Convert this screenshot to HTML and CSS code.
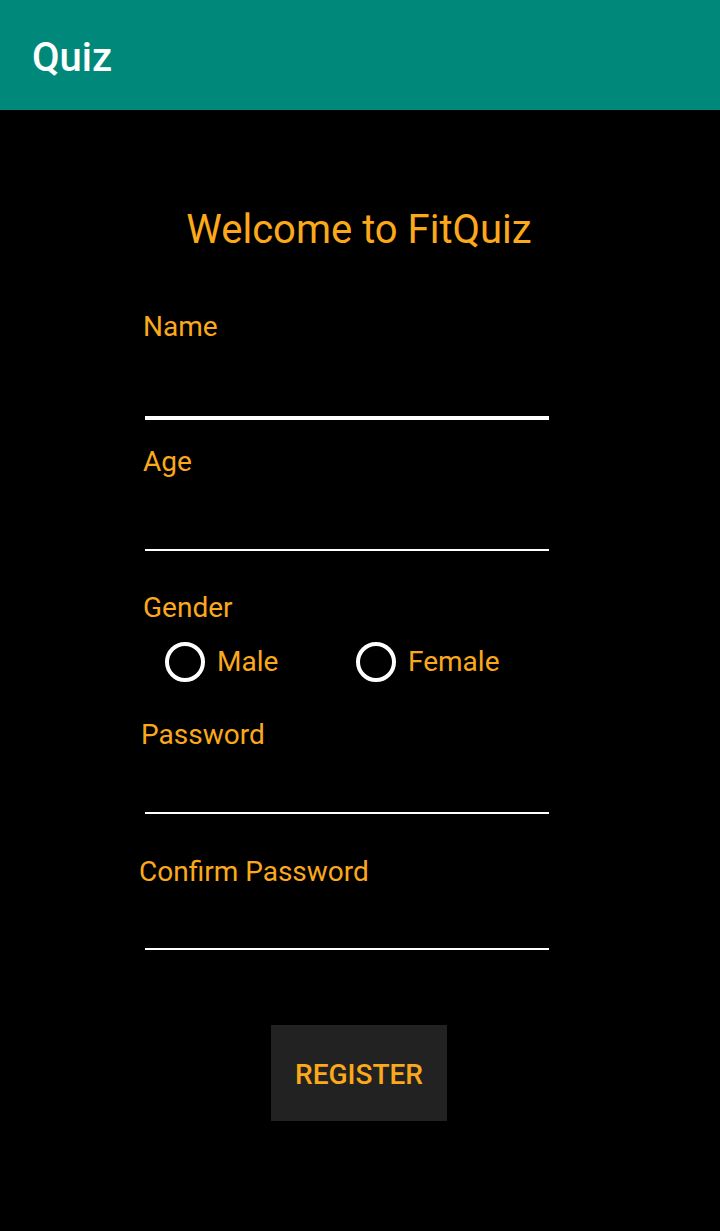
FILE: index.html
```html
<!DOCTYPE html>
<html>
<head>
<meta charset="utf-8">
<link rel="stylesheet" href="styles.css">
</head>
<body>
<header class="appbar"><span class="appbar-title">Quiz</span></header>
<main class="content">
  <h1 class="welcome">Welcome to FitQuiz</h1>
  <form class="form">
    <label class="label label-name">Name</label>
    <div class="field field-focused field-name"></div>
    <label class="label label-age">Age</label>
    <div class="field field-age"></div>
    <label class="label label-gender">Gender</label>
    <div class="radios">
      <div class="radio radio-male"><span class="radio-circle"></span><span class="radio-text">Male</span></div>
      <div class="radio radio-female"><span class="radio-circle"></span><span class="radio-text">Female</span></div>
    </div>
    <label class="label label-password">Password</label>
    <div class="field field-password"></div>
    <label class="label label-confirm">Confirm Password</label>
    <div class="field field-confirm"></div>
  </form>
  <div class="actions"><button class="btn" type="button">REGISTER</button></div>
</main>
</body>
</html>
```
FILE: styles.css
```css
html, body {
  margin: 0;
  padding: 0;
  background: #000;
  font-family: Roboto, "Noto Sans", sans-serif;
}
.appbar {
  height: 110px;
  box-sizing: border-box;
  background: #00897b;
  padding: 6px 0 0 32px;
  line-height: 104px;
}
.appbar-title {
  color: #fff;
  font-size: 40px;
  font-weight: 500;
}
.content {
  display: flex;
  flex-direction: column;
}
.welcome {
  margin: 96px 0 0 0;
  text-align: center;
  font-size: 40px;
  font-weight: 400;
  line-height: 48px;
  color: #fba91a;
  padding-right: 2px;
}
.form {
  display: flex;
  flex-direction: column;
  width: 404px;
  margin-left: 145px;
  margin-top: 56px;
}
.label {
  color: #fba91a;
  font-size: 28px;
  line-height: 34px;
  margin-left: -2px;
}
.label-age { margin-top: 25px; }
.label-gender { margin-top: 40px; }
.label-password { margin-top: 36px; margin-left: -4px; }
.label-confirm { margin-top: 41px; margin-left: -6px; }
.field {
  border-bottom: 2px solid #fff;
}
.field-focused { border-bottom-width: 4px; }
.field-name { height: 72px; }
.field-age { height: 70px; }
.field-password { height: 60px; }
.field-confirm { height: 59px; }
.radios {
  display: flex;
  margin-top: 17px;
  margin-left: 20px;
  height: 40px;
}
.radio {
  display: flex;
  align-items: center;
  height: 40px;
}
.radio-male { width: 191px; }
.radio-circle {
  width: 40px;
  height: 40px;
  box-sizing: border-box;
  border: 4px solid #fff;
  border-radius: 50%;
}
.radio-text {
  color: #fba91a;
  font-size: 28px;
  line-height: 40px;
  margin-left: 12px;
}
.actions {
  display: flex;
  justify-content: center;
  margin-top: 75px;
  padding-right: 2px;
}
.btn {
  width: 176px;
  height: 96px;
  border: 0;
  background: #222;
  color: #fba91a;
  font-family: Roboto, sans-serif;
  font-size: 28px;
  font-weight: 500;
  padding: 2px 0 0 0;
}
```
